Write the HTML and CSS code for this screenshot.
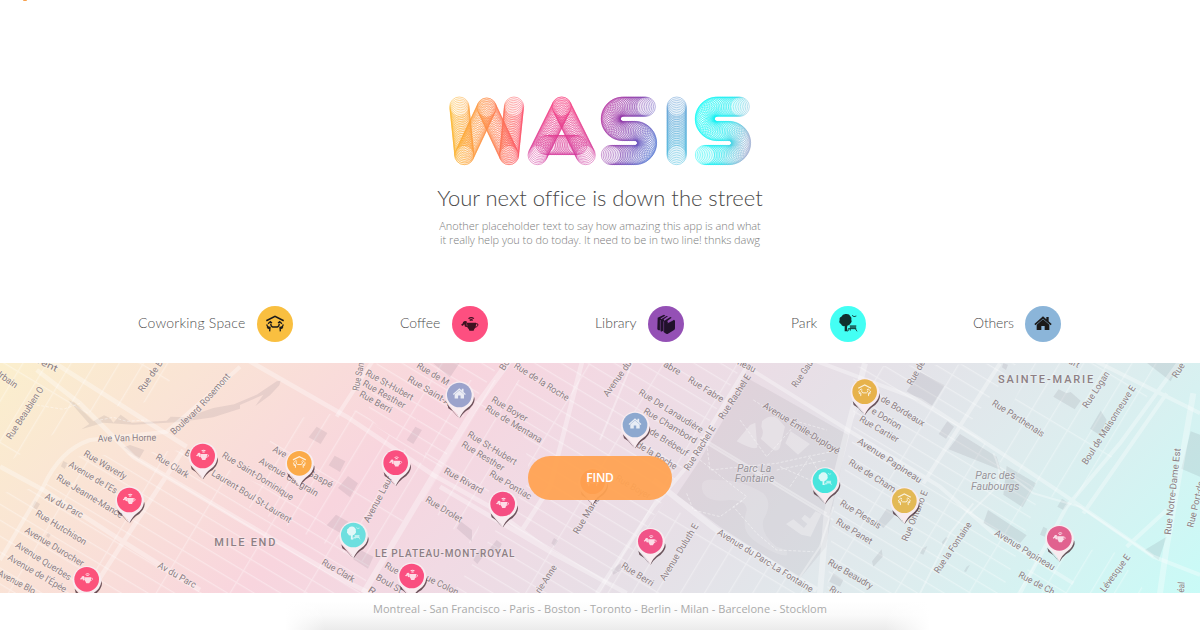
FILE: index.html
```html
<!DOCTYPE html>
<html lang="en">
<head>
<meta charset="utf-8">
<title>Wasis</title>
<link rel="stylesheet" href="styles.css">
</head>
<body>
<svg class="defs" aria-hidden="true">
  <symbol id="i-cowork" viewBox="-54 -54 108 108">
    <g fill="none" stroke="currentColor" stroke-width="5">
      <path d="M-26-10 0-23 26-10"/>
      <path d="M-21-1-14-7-9-3M21-1 14-7 9-3" stroke-width="4"/>
      <path d="M-13-1Q-12 8-7 9H7Q12 8 13-1" stroke-width="4"/>
      <path d="M-24 1Q-25 9-15 10L-16 22M24 1Q25 9 15 10L16 22M-24 10-17 14M24 10 17 14" stroke-width="4"/>
    </g>
  </symbol>
  <symbol id="i-coffee" viewBox="-54 -54 108 108">
    <path fill="currentColor" d="M-10-4H18Q19 10 12 16Q14 18 10 20H-1Q-5 18-3 16Q-11 10-10-4ZM-10-8Q-17-11-21-5Q-20-1-26 1Q-27 6-21 5Q-19 1-16 2Q-18 7-12 9L-8 6ZM-6-17Q4-25 13-17L10-15Q4-20-3-15ZM-2-13Q4-17 9-13L7-9Q4-12 0-9Z"/>
    <path fill="none" stroke="currentColor" stroke-width="3" d="M18-1Q25-2 24 4Q21 9 14 10"/>
  </symbol>
  <symbol id="i-library" viewBox="-54 -54 108 108">
    <path fill="currentColor" d="M-25-19-6-28-2-25-16-17-15-14 2-24 6-23-7-14-5-10 13-21 17-19 4-9 6-4 24-13 27-10V13Q27 17 23 19L6 29Q2 31-2 28L-7 24-8 20-15 23-17 19-22 19Q-26 18-26 14Z"/>
    <path fill="none" stroke="#9450b5" stroke-width="1.5" d="M-17-12V20M-7-8V22M5-3 22-12"/>
  </symbol>
  <symbol id="i-park" viewBox="-54 -54 108 108">
    <path fill="currentColor" d="M-6-30Q4-31 7-23Q12-19 10-13Q13-7 8-2Q4 5-2 5L-3 12-1 22H-10V6Q-19 8-21 0Q-29-4-25-12Q-27-20-20-22Q-16-31-6-30Z"/>
    <path fill="currentColor" d="M5 4H25L24 14H6Z" opacity=".7"/>
    <path fill="none" stroke="currentColor" stroke-width="2.5" d="M0 14H25M4 14-1 22M22 14 27 22M7 14V20M12-26 18-22 25-24"/>
  </symbol>
  <symbol id="i-house" viewBox="-54 -54 108 108">
    <path fill="currentColor" d="M0-14 19 2V18H5V6H-5V18H-19V2ZM0-23 10-14V-21H17V-8L26 0 23 4 0-16-23 4-26 0Z"/>
  </symbol>
</svg>

<span class="spark"></span>

<header class="hero">
  <svg class="logo" id="logo" viewBox="54 48 914 210" role="img" aria-label="Wasis">
    <defs>
      <linearGradient id="lg-w" gradientUnits="userSpaceOnUse" x1="58" y1="0" x2="285" y2="0"><stop offset="0" stop-color="#fbb829"/><stop offset=".5" stop-color="#fd8a45"/><stop offset="1" stop-color="#fb4668"/></linearGradient>
      <linearGradient id="lg-a" gradientUnits="userSpaceOnUse" x1="380" y1="50" x2="400" y2="255"><stop offset="0" stop-color="#f9407d"/><stop offset="1" stop-color="#cd38a0"/></linearGradient>
      <linearGradient id="lg-s" gradientUnits="userSpaceOnUse" x1="515" y1="110" x2="680" y2="180"><stop offset="0" stop-color="#b02a9d"/><stop offset=".5" stop-color="#8240ae"/><stop offset="1" stop-color="#5272cf"/></linearGradient>
      <linearGradient id="lg-i" gradientUnits="userSpaceOnUse" x1="710" y1="50" x2="770" y2="255"><stop offset="0" stop-color="#6598d2"/><stop offset="1" stop-color="#43bfdf"/></linearGradient>
      <linearGradient id="lg-z" gradientUnits="userSpaceOnUse" x1="797" y1="110" x2="965" y2="150"><stop offset="0" stop-color="#00fbf5"/><stop offset=".55" stop-color="#20eaf0"/><stop offset="1" stop-color="#9aabd0"/></linearGradient>
    </defs>
  </svg>
  <h1 class="title">Your next office is down the street</h1>
  <p class="lead"><span class="l1">Another placeholder text to say how amazing this app is and what</span><br><span class="l2">it really help you to do today. It need to be in two line! thnks dawg</span></p>
</header>

<ul class="legend">
  <li class="kind kind-cowork"><span class="name">Coworking Space</span><svg class="dot"><use href="#i-cowork"/></svg></li>
  <li class="kind kind-coffee"><span class="name">Coffee</span><svg class="dot"><use href="#i-coffee"/></svg></li>
  <li class="kind kind-library"><span class="name">Library</span><svg class="dot"><use href="#i-library"/></svg></li>
  <li class="kind kind-park"><span class="name">Park</span><svg class="dot"><use href="#i-park"/></svg></li>
  <li class="kind kind-others"><span class="name">Others</span><svg class="dot"><use href="#i-house"/></svg></li>
</ul>

<main class="map">
  <svg class="canvas" id="map" viewBox="0 9 3600 690" preserveAspectRatio="none">
    <defs>
      <pattern id="grid" width="190" height="41" patternUnits="userSpaceOnUse" patternTransform="rotate(31)">
        <path class="minor" d="M0 2H190M2 0V41"/>
      </pattern>
      <pattern id="grid2" width="62" height="210" patternUnits="userSpaceOnUse" patternTransform="rotate(31)">
        <path class="minor" d="M0 2H62M2 0V210"/>
      </pattern>
    </defs>
    <path fill="url(#grid)" d="M0 400 130 380 220 290 560 270 900 430 1110 600 1090 710H0ZM1130 10 1500 10 1390 170 1320 330 1100 180ZM1540 10 2230 10 1960 470 1810 710H1350L1590 360ZM2560 20 3050 10 2900 200 3120 400 3000 710H2480L2500 460 2560 230Z"/>
    <path fill="url(#grid2)" d="M0 0H540L480 120 280 150 0 320ZM850 180 1080 150 1300 340 1120 620 700 420ZM1340 60 1560 60 1420 560 1240 400ZM1800 710 1990 430 2500 710ZM3100 10 3480 10 3400 220 3200 440 2960 280ZM3100 600 3330 560 3440 700H3040Z"/>
    <g class="block">
      <path d="M390 255 433 270 417 297 372 262ZM190 303 203 310 194 327 183 319ZM105 422 120 432 110 449 96 440ZM144 518 152 524 146 534 138 528Z"/>
      <path d="M205 120 224 128 280 184 312 166 330 174 340 188 362 164 395 188 500 182 512 170 560 172 640 144 720 130V146L640 172 540 186 400 194 310 188 244 208 268 192ZM690 138 770 104 830 64 842 62 838 76 810 106 766 138 790 104 690 148Z"/>
      <path d="M950 200 982 219 962 252 926 232ZM1004 287 1036 304 1020 336 986 316ZM1044 348 1074 370 1050 412 1014 384ZM1008 464 1046 486 1020 518 980 496ZM1246 200 1266 210 1240 252 1220 240ZM1070 564 1120 590 1104 626 1060 598Z"/>
      <path d="M1300 10H1378L1350 52ZM1382 484 1416 510V545L1370 505ZM1490 540 1506 552 1490 580 1470 565ZM1662 534 1674 542 1664 558 1654 550ZM1440 568 1456 580 1432 612 1420 600ZM1862 610 1864 630 1840 644 1834 630Z"/>
      <path class="park" d="M2030 405 2100 300 2190 145 2235 50 2545 225 2500 430 2478 560 2400 655 2160 500Z"/>
      <path d="M2760 36 2834 76 2794 140 2720 94ZM2842 184 2862 200 2838 236 2816 222ZM2660 446 2690 460 2650 504 2632 488ZM2645 568 2648 590 2620 620 2616 604ZM2500 640 2530 660 2520 680 2488 665ZM3176 88 3200 100 3212 96 3242 122 3224 148 3160 110ZM3302 152 3320 180 3300 226 3270 206ZM3440 8H3540L3512 64ZM3572 214 3600 224V350L3544 326Z"/>
      <path d="M2880 222 2990 290 3002 330 2846 268ZM3020 318 3108 370 3068 442 3010 404ZM2964 450 3080 526 3060 550 2950 490ZM3186 416 3206 430 3190 450 3172 440ZM3500 530 3476 600 3434 570ZM3130 500 3142 506 3134 530 3120 524ZM2844 534 2828 556 2826 546 2838 532ZM2768 565 2782 558 2770 584 2760 580ZM2900 620 2910 614 2898 636 2892 634ZM3010 10 3024 14 3018 30 3006 22Z"/>
    </g>
    <g class="field">
      <path d="M2250 195 2266 188 2272 262Q2260 272 2210 244ZM2286 184Q2310 160 2334 176L2355 200 2340 262Q2334 276 2320 270L2282 236Q2294 220 2284 200ZM2372 214 2430 252 2394 284 2356 250Z"/>
      <path d="M2380 478 2412 504 2422 492 2404 476 2414 464 2430 476 2446 454 2464 462 2432 530 2404 524 2358 492Z"/>
      <path opacity=".5" d="M2110 400Q2090 350 2150 360 2230 360 2290 400 2320 430 2290 480 2280 520 2330 560 2370 570 2360 586 2330 590 2260 540 2220 510 2240 450 2240 420 2190 420 2130 430 2110 400Z"/>
    </g>
    <g class="trail">
      <path d="M110 135 190 148 240 130M300 180 340 172 380 184 440 180M2060 400 2080 450 2160 470 2230 420M2100 300 2240 410 2200 440 2270 520 2330 570 2440 575M2120 250 2130 330 2330 310 2420 290 2520 270M2330 330 2480 300M2370 380 2430 290 2480 380M2220 180 2300 290 2380 200M2340 320 2520 400M2260 120 2340 170 2480 210"/>
    </g>
    <g class="road">
      <path d="M110 30 240 130 400 290 720 480 1030 660 1110 700M150 0 560 260M0 320 130 390 370 545 600 690M690 -30 1040 170 1300 345 1470 440 1650 575 1880 700M1320 380 1650 575M270 700 370 545 550 270M1750 -10 1650 380 1560 520" class="mid"/>
      <path d="M0 600 130 380Q180 270 270 240L500 215Q600 130 720 20M1010 170 1120 0M1790 700 1960 440 2060 320 2240 20M2440 0 2760 120 3020 290 3200 410 3460 590 3600 645M2770 370 3000 10M3060 700 3200 440 3360 250 3600 -80M2240 20 2560 220 2820 380 2980 520 3220 670M3250 460 3500 100M3280 0 3600 160M3380 560 3500 450"/>
      <path class="wide" d="M1090 700 1310 330 1420 150 1530 0M1960 360 2150 510 2450 690M2595 10 2540 220 2480 460 2460 700M3580 100 3500 560 3480 700"/>
      <path class="thin" d="M2760 700 2850 520 2920 430M1800 240 1900 0M2100 230 2480 460M2120 250 2500 480M2980 280Q3010 340 2990 380L2910 460M3020 340 3100 400 3240 440 3460 590M2400 650 2460 560 2500 440"/>
    </g>
    <g id="labels"></g>
    <g id="pins"></g>
  </svg>
  <button class="find">FIND</button>
</main>

<footer class="cities"><span class="list">Montreal - San Francisco - Paris - Boston - Toronto - Berlin - Milan - Barcelone - Stocklom</span></footer>
<script src="app.js"></script>
</body>
</html>
```
FILE: styles.css
```css
* { box-sizing: border-box; }
html { overflow: hidden; }
body {
  margin: 0;
  height: 630px;
  overflow: hidden;
  position: relative;
  background: #fff;
  font-family: "Open Sans", sans-serif;
}
.defs { position: absolute; width: 0; height: 0; }
.spark {
  position: absolute;
  left: 23px;
  top: 0;
  width: 4px;
  height: 1px;
  border-radius: 0 0 2px 2px;
  background: #f7a04d;
}
.hero {
  height: 306px;
  padding-top: 96px;
  display: flex;
  flex-direction: column;
  align-items: center;
}
.logo { width: 304.7px; height: 70px; display: block; }
.logo circle { fill: none; stroke-width: 1.5; }
.title {
  margin: 16px 0 0;
  font: 300 22px/31px Lato, sans-serif;
  letter-spacing: -.02px;
  color: #4a4a4a;
  white-space: nowrap;
}
.lead {
  margin: 5.5px 0 0;
  font-size: 11px;
  font-weight: 300;
  line-height: 14.5px;
  letter-spacing: -.04px;
  color: #7d7d7d;
  text-align: center;
  white-space: nowrap;
}
.legend {
  list-style: none;
  margin: 0;
  padding: 0 139px 0 138px;
  height: 57px;
  display: flex;
  justify-content: space-between;
  align-items: flex-start;
}
.kind {
  display: flex;
  justify-content: space-between;
  align-items: center;
  width: 88px;
  height: 36px;
}
.kind .name {
  font: 300 14px/34px Lato, sans-serif;
  height: 36px;
  color: #505050;
  white-space: nowrap;
}
.dot {
  width: 36px;
  height: 36px;
  border-radius: 50%;
  color: #1b1a1a;
}
.kind-cowork { width: 155px; }
.kind-cowork .name { letter-spacing: .2px; }
.kind-cowork .dot { background: #f9bf40; }
.kind-coffee .dot { background: #fd4f80; color: #3c1220; }
.kind-library { width: 89px; }
.kind-library .dot { background: #9450b5; color: #21112b; }
.kind-park { width: 75px; }
.kind-park .dot { background: #43fff4; color: #10302e; }
.kind-others .name { letter-spacing: -.15px; }
.kind-others .dot { background: #8bb5d9; }

.map {
  height: 230px;
  display: grid;
  place-items: center;
  background: linear-gradient(135deg, #fbefcd 0%, #fae4d5 14%, #f8d5de 33%, #f1dae4 45%, #e6e0e7 60%, #deecee 78%, #c9fbf7 100%);
}
.canvas, .find { grid-area: 1 / 1; }
.canvas { width: 1200px; height: 230px; display: block; overflow: hidden; }
.minor { fill: none; stroke: #fff; stroke-opacity: .34; stroke-width: 3.4; }
.block { fill: #504858; fill-opacity: .1; }
.block .park { fill-opacity: .07; }
.field { fill: #fff; fill-opacity: .3; }
.trail { fill: none; stroke: #fff; stroke-opacity: .42; stroke-width: 3; stroke-dasharray: 9 5; }
.road { fill: none; stroke: #fff; stroke-opacity: .33; stroke-width: 12; stroke-linejoin: round; }
.road .mid { stroke-width: 14; }
.road .wide { stroke-width: 18; }
.road .thin { stroke-width: 6; }
.label {
  font: 400 28px Roboto, sans-serif;
  fill: #8d7f84;
  stroke: #fff;
  stroke-opacity: .25;
  stroke-width: 5;
  paint-order: stroke;
}
.label-area { font-size: 30px; font-weight: 500; }
.label-district { font-size: 33px; font-weight: 500; }
.label-park { font-size: 31px; font-style: italic; fill: #99959b; }
.pin-shadow { fill: #4b3038; fill-opacity: .8; }
.pin-body { fill: #f8ecf0; }
.pin-icon { color: #fff; opacity: .8; }

.find {
  width: 144px;
  height: 44px;
  border: 0;
  border-radius: 22px;
  background: rgba(255, 163, 82, .94);
  color: #fff;
  font: 600 12px/44px "Open Sans", sans-serif;
  letter-spacing: -.2px;
  padding: 0;
}
.cities {
  height: 37px;
  padding-top: 8px;
  font-size: 11px;
  line-height: 16px;
  letter-spacing: .04px;
  color: #aaa;
  text-align: center;
  white-space: nowrap;
  background:
    linear-gradient(90deg, #fff 285px, rgba(255, 255, 255, 0) 325px, rgba(255, 255, 255, 0) 885px, #fff 930px),
    linear-gradient(#fff 8px, #fafafa 22px, #ebebeb 37px);
}
```
FILE: app.js
```javascript
const NS = 'http://www.w3.org/2000/svg';
function add(parent, tag, attrs, text) {
  const el = document.createElementNS(NS, tag);
  for (const k in attrs) el.setAttribute(k, attrs[k]);
  if (text) el.textContent = text;
  parent.appendChild(el);
  return el;
}

// Logo: every letter stroke is a row of overlapping rings.
const logo = document.getElementById('logo');
const S = x => `M${647 + x} 80H${579 + x}A36.5 36.5 0 0 0 ${579 + x} 153H${615 + x}A36 36 0 0 1 ${615 + x} 225H${543 + x}`;
const strokes = [
  ['w', 'M88 80 103 225'], ['w', 'M103 225 170 83'], ['w', 'M170 83 237 225'], ['w', 'M237 225 252 80'],
  ['a', 'M323 225 395 80'], ['a', 'M395 80 467 225'], ['a', 'M348 195H442'],
  ['s', S(0)], ['i', 'M740 80V225'], ['z', S(282)]
];
for (const [tone, d] of strokes) {
  const p = document.createElementNS(NS, 'path');
  p.setAttribute('d', d);
  const len = p.getTotalLength();
  const n = Math.round(len / 5.2);
  for (let i = 0; i <= n; i++) {
    const q = p.getPointAtLength(len * i / n);
    add(logo, 'circle', { cx: q.x, cy: q.y, r: 29, stroke: `url(#lg-${tone})` });
  }
}

// Street names: baseline start, baseline end, text, optional style.
const labels = [
  [249,286,373,360,'Rue Waverly'],[293,245,469,242,'Ave Van Horne'],[465,296,560,355,'Rue Clark'],
  [204,319,345,402,"Avenue de l'Es"],[167,358,362,475,'Rue Jeanne-Mance'],[133,415,243,475,'Av du Parc'],
  [104,465,253,556,'Rue Hutchison'],[72,516,245,620,'Avenue Durocher'],[44,560,207,662,'Avenue Querbes'],
  [21,598,193,698,"Avenue de l'Épée"],[-8,646,100,703,'Avenue Blo'],[471,622,582,685,'Av du Parc'],
  [-18,42,45,86,'Urbain'],[110,8,168,36,'rent'],[33,240,132,88,'Rue Beaubien O'],[428,98,490,8,'Rue de B'],
  [522,226,606,148,'Boulevard'],[612,140,692,50,'Rosemont'],[643,558,826,558,'MILE END','district'],
  [664,290,873,422,'Rue Saint-Dominique'],[632,344,868,490,'Laurent Boul St-Laurent'],[552,284,566,292,'B'],
  [1076,94,1092,10,'Rue San'],[1094,44,1234,122,'Rue St-Hubert'],[1086,76,1210,146,'Rue Resther'],
  [1076,108,1170,160,'Rue Berri'],[1248,22,1340,78,'Rue de M'],[1220,62,1345,138,'Rue Saint-A'],
  [816,273,854,294,'Ave'],[775,308,948,410,'Avenue Casgrain'],[920,344,992,384,'Gaspé'],
  [1106,490,1178,355,'Avenue Laur'],[963,612,1058,668,'Rue Clark'],[1125,590,1543,590,'LE PLATEAU-MONT-ROYAL','area'],
  [1152,622,1190,644,'Rue'],[1276,660,1370,706,'ue Colon'],[1126,658,1200,700,'Boul St'],[1102,694,1120,706,'R'],
  [1274,424,1380,488,'Rue Drolet'],[1330,338,1444,402,'Rue Rivard'],
  [1540,22,1700,124,'Rue de la Roche'],[1512,34,1530,6,'Bo'],[1472,124,1576,186,'Rue Boyer'],
  [1454,150,1620,250,'Rue de Mentana'],[1400,228,1544,316,'Rue St-Hubert'],[1382,258,1506,334,'Rue Resther'],
  [1466,346,1588,420,'Rue Pontiac'],[1823,112,1896,10,'Avenue du'],[1988,18,2036,46,'abre'],
  [2062,64,2164,128,'Rue Fabre'],[1914,102,2102,220,'Rue De Lanaudière'],[1928,158,2084,252,'Rue Chambord'],
  [1946,220,2058,290,'de Brébeuf'],[1908,260,2024,330,'de la Roche'],[1845,360,1945,418,'Rue Boyer'],
  [1734,524,1800,415,'Rue Marie'],[1620,702,1672,622,'rie-Anne'],[1862,622,1954,680,'Rue Berri'],
  [1994,664,2096,498,'Avenue Duluth E'],
  [2170,180,2254,50,'Rue Rachel E'],[2066,334,2148,204,'Rue Rachel E'],[2210,12,2262,38,'neau'],
  [2389,84,2440,10,'Rue Gau'],[2287,142,2512,284,'Avenue Émile-Duployé'],
  [2211,336,2314,336,'Parc La','park'],[2204,367,2323,367,'Fontaine','park'],
  [2150,522,2432,698,'Avenue du Parc-La Fontaine'],[2640,122,2768,200,'de Bordeaux'],[2612,158,2698,210,'e Dorion'],
  [2576,182,2690,248,'Rue Cartier'],[2570,248,2758,370,'Avenue Papineau'],[2544,312,2680,398,'Rue de Cham'],
  [2722,546,2784,396,'Rue Ontario E'],[2518,434,2636,508,'Rue Plessis'],[2506,490,2610,554,'Rue Panet'],
  [2482,612,2612,688,'Rue Beaudry'],[2486,692,2522,714,'Rue'],[2736,78,2776,8,'Rue de'],
  [2994,70,3280,70,'SAINTE-MARIE','district'],[2974,134,3126,232,'Rue Parthenais'],[3262,146,3330,42,'Rue Logan'],
  [3260,316,3408,84,'Boul de Maisonneuve E'],[3530,56,3556,16,'Rue'],[3204,10,3234,24,'art'],
  [2926,358,3046,358,'Parc des','park'],[2913,390,3059,390,'Faubourgs','park'],
  [2982,524,3158,632,'Avenue Papineau'],[2816,642,2916,494,'Rue la Fontaine'],[3053,650,3158,706,'Rue de Ch'],
  [3314,698,3392,592,'Lévesque E'],[3512,525,3542,266,'Rue Notre-Dame Est'],[3580,504,3612,366,'Rue Port-de'],
  [3552,698,3554,666,'éal']
];
const layer = document.getElementById('labels');
for (const [x1, y1, x2, y2, name, style] of labels) {
  const dx = x2 - x1, dy = y2 - y1;
  add(layer, 'text', {
    class: 'label' + (style ? ' label-' + style : ''),
    transform: `translate(${x1} ${y1}) rotate(${Math.atan2(dy, dx) * 180 / Math.PI})`,
    textLength: Math.hypot(dx, dy),
    lengthAdjust: style === 'district' || style === 'area' ? 'spacing' : 'spacingAndGlyphs'
  }, name);
}

const pins = [
  [608,288,'coffee','#fc527b'],[388,420,'coffee','#fc527b'],[260,658,'coffee','#fc527b'],
  [1187,308,'coffee','#fa4f80'],[1235,648,'coffee','#fa4f80'],[1508,432,'coffee','#f54e82'],
  [1951,544,'coffee','#f15388'],[3178,535,'coffee','#e1628f'],
  [1378,105,'house','#9ba3cc'],[1905,195,'house','#8da8cf'],
  [898,310,'cowork','#fbab49'],[2594,95,'cowork','#e7b24b'],[2713,422,'cowork','#e3b956'],[1778,365,'cowork','#e86a28'],
  [1060,525,'park','#6ddfdf'],[2475,362,'park','#49e5dd']
];
const pinLayer = document.getElementById('pins');
for (const [x, y, kind, color] of pins) {
  const g = add(pinLayer, 'g', { transform: `translate(${x} ${y})` });
  add(g, 'path', { class: 'pin-shadow', d: 'M43 4Q50 14 40 30Q32 42 20 48Q8 58 1 70L-6 58 20 20ZM-36 28-33 40Q-20 46-8 62L-2 68Z' });
  add(g, 'path', { class: 'pin-body', d: 'M0 70Q-7 53-22 39A43 43 0 1 1 24 39Q8 50 0 70Z' });
  add(g, 'circle', { r: 37, fill: color });
  add(g, 'use', { class: 'pin-icon', href: '#i-' + kind, x: -40, y: -43, width: 80, height: 80 });
}
```
